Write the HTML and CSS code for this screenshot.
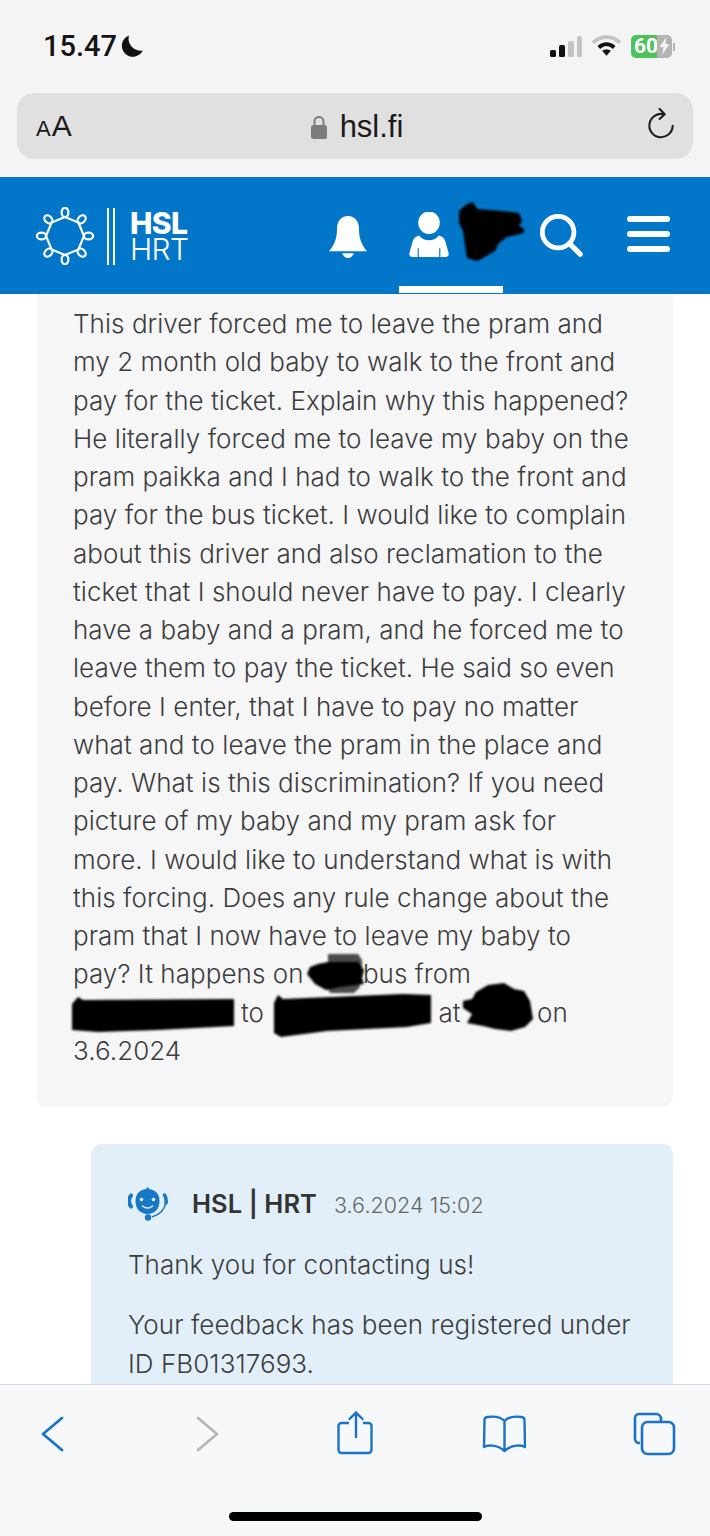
FILE: index.html
```html
<!DOCTYPE html>
<html lang="en">
<head>
<meta charset="utf-8">
<title>HSL feedback</title>
<link rel="stylesheet" href="styles.css">
</head>
<body>
<div class="phone">
  <div class="status">
    <div class="time"><span>15.47</span>
      <svg class="moon" viewBox="0 0 24 24" width="24" height="24"><path d="M9 1.500A11 11 0 1 0 22.800 16.500 A12 12 0 0 1 9 1.500Z" fill="#111"/></svg>
    </div>
    <div class="status-right">
      <svg width="32" height="21" viewBox="0 0 32 21"><rect x="0" y="14" width="6" height="7" rx="1.500" fill="#111"/><rect x="9" y="9" width="6" height="12" rx="1.500" fill="#111"/><rect x="18" y="5" width="6" height="16" rx="1.500" fill="#c4c4c4"/><rect x="27" y="0" width="5" height="21" rx="1.500" fill="#c4c4c4"/></svg>
      <svg width="29" height="22" viewBox="0 0 30 22"><path d="M1 7.500C9 0 21 0 29 7.500" fill="none" stroke="#c4c4c4" stroke-width="4"/><path d="M7 12.500C12 8 18 8 23 12.500" fill="none" stroke="#111" stroke-width="4"/><path d="M10.500 16L15 21l4.500-5C17 14 13 14 10.500 16Z" fill="#111"/></svg>
      <div class="battery"><div class="battery-fill">60</div><div class="battery-rest">
        <svg width="11" height="18" viewBox="0 0 10 16"><path d="M6.500 0L0.500 9h3.500L3 16l6.500-9.500H6Z" fill="#f2f2f2"/></svg>
      </div><i class="battery-cap"></i></div>
    </div>
  </div>

  <div class="urlbar">
    <div class="aa"><small>A</small>A</div>
    <div class="host">
      <svg width="16" height="24" viewBox="0 0 16 24"><path d="M3.500 11V6.500a4.500 4.500 0 0 1 9 0V11" fill="none" stroke="#7c7c7c" stroke-width="2"/><rect x="0" y="10" width="16" height="14" rx="2.500" fill="#7c7c7c"/></svg>
      <span>hsl.fi</span>
    </div>
    <div class="reload">
      <svg width="28" height="33" viewBox="0 0 30 35"><path d="M18 6.500A12.500 12.500 0 1 0 27.500 19" fill="none" stroke="#1c1c1c" stroke-width="2.200" stroke-linecap="round"/><path d="M13.500 1L19 6.500l-5.500 5" fill="none" stroke="#1c1c1c" stroke-width="2.200" stroke-linecap="round" stroke-linejoin="round"/></svg>
    </div>
  </div>

  <header class="site-header">
    <div class="brand">
      <svg class="brand-mark" width="58" height="58" viewBox="-29 -29 58 58">
        <g fill="none" stroke="#fff" stroke-width="2.200">
          <polygon points="0,-19 13.400,-13.400 19,0 13.400,13.400 0,19 -13.400,13.400 -19,0 -13.400,-13.400"/>
          <ellipse cx="0" cy="-23.500" rx="3.400" ry="4.600"/>
          <ellipse cx="0" cy="-23.500" rx="3.400" ry="4.600" transform="rotate(45)"/>
          <ellipse cx="0" cy="-23.500" rx="3.400" ry="4.600" transform="rotate(90)"/>
          <ellipse cx="0" cy="-23.500" rx="3.400" ry="4.600" transform="rotate(135)"/>
          <ellipse cx="0" cy="-23.500" rx="3.400" ry="4.600" transform="rotate(180)"/>
          <ellipse cx="0" cy="-23.500" rx="3.400" ry="4.600" transform="rotate(225)"/>
          <ellipse cx="0" cy="-23.500" rx="3.400" ry="4.600" transform="rotate(270)"/>
          <ellipse cx="0" cy="-23.500" rx="3.400" ry="4.600" transform="rotate(315)"/>
        </g>
      </svg>
      <div class="brand-bars"></div>
      <div class="brand-name"><b>HSL</b><span>HRT</span></div>
    </div>
    <nav class="site-nav">
      <svg class="ico-bell" width="40" height="42" viewBox="0 0 40 44"><path d="M20 0c-7.500 0-11.500 6-11.500 13 0 10-2.500 17-8.500 24h40c-6-7-8.500-14-8.500-24C31.500 6 27.500 0 20 0Z" fill="#fff"/><path d="M14 39h12c-1 3.500-3.500 5-6 5s-5-1.500-6-5Z" fill="#fff"/></svg>
      <div class="nav-user">
        <svg width="40" height="45" viewBox="0 0 40 46"><ellipse cx="20" cy="11" rx="11" ry="11.500" fill="#fff"/><path d="M10 24c2 3 5.500 5 10 5s8-2 10-5c4 1 6 3 7 7l3 11c.5 2-.5 4-3 4H3c-2.500 0-3.500-2-3-4l3-11c1-4 3-6 7-7Z" fill="#fff"/><path d="M9 37v9M31 37v9" stroke="#0277c9" stroke-width="1.200"/></svg>
      </div>
      <svg class="ico-search" width="44" height="44" viewBox="0 0 46 46"><circle cx="20" cy="20" r="16.500" fill="none" stroke="#fff" stroke-width="5"/><path d="M32 32l11 11" stroke="#fff" stroke-width="5.500" stroke-linecap="round"/></svg>
      <div class="ico-menu"><i></i><i></i><i></i></div>
    </nav>
    <svg class="blob-user" width="70" height="62" viewBox="0 0 70 62"><path d="M2 10L10 3 16 1 20 8 45 10 62 12 65 20 62 25 67 28 67 32 50 36 42 42 38 50 24 58 20 60 10 57 8 44 6 30 2 22Z" fill="#000"/></svg>
  </header>

  <main class="thread">
    <section class="msg msg-user">
      <p>This driver forced me to leave the pram and<br>
      my 2 month old baby to walk to the front and<br>
      pay for the ticket. Explain why this happened?<br>
      He literally forced me to leave my baby on the<br>
      pram paikka and I had to walk to the front and<br>
      pay for the bus ticket. I would like to complain<br>
      about this driver and also reclamation to the<br>
      ticket that I should never have to pay. I clearly<br>
      have a baby and a pram, and he forced me to<br>
      leave them to pay the ticket. He said so even<br>
      before I enter, that I have to pay no matter<br>
      what and to leave the pram in the place and<br>
      pay. What is this discrimination? If you need<br>
      picture of my baby and my pram ask for<br>
      more. I would like to understand what is with<br>
      this forcing. Does any rule change about the<br>
      pram that I now have to leave my baby to<br>
      pay? It happens on <span class="gap gap-bus"></span>bus from<br>
      <span class="gap gap-from"></span>to <span class="gap gap-to"></span>at <span class="gap gap-at"></span>on<br>
      3.6.2024</p>
      <svg class="redactions" width="636" height="813" viewBox="37 293 636 813">
        <path d="M328 953h30l4 6v6l-3 5 1 16-6 6h-24l-3-6 1-4Z" fill="#4a4a4a"/>
        <path d="M318 963l10-2 30 0 6 8-2 8 2 6-24 3-14 3-11-6-8-10 3-7Z" fill="#000"/>
        <path d="M72 1003l6-7 5 3 151-1 0 27-76 4-60 2-26-2Z" fill="#000"/>
        <path d="M274 1002l4-8 5 4 120-5 28 1 0 28-24 4-80 4-46 6-7-4Z" fill="#000"/>
        <path d="M463 1000l9-2 4-7 12-7 16-2 10 6 10 2 6 10 3 18-8 8-14 4-16-2-12-3-16-3 5-9-9-6Z" fill="#000"/>
      </svg>
    </section>

    <section class="msg msg-hsl">
      <div class="msg-head">
        <svg width="40" height="34" viewBox="0 0 40 34">
          <path d="M19.500 2c8 0 12 5 12 12 0 8-5 13-12 13S7.500 22 7.500 14C7.500 7 11.500 2 19.500 2Z" fill="#1878c6"/>
          <path d="M17 3L19.500 0 22 3Z" fill="#1878c6"/>
          <path d="M3 8.500C0.500 12 0.500 16 3 19.500" fill="none" stroke="#1878c6" stroke-width="4" stroke-linecap="round"/>
          <path d="M36.500 8C38.500 11 38.500 13 38 16" fill="none" stroke="#1878c6" stroke-width="3.500" stroke-linecap="round"/>
          <path d="M38 15C37 22 33 27 24 30" fill="none" stroke="#1878c6" stroke-width="1.600"/>
          <circle cx="13.500" cy="12.500" r="1.800" fill="#e2eff8"/><circle cx="25.500" cy="12.500" r="1.800" fill="#e2eff8"/>
          <path d="M14.500 19c3 2.500 7 2.500 10 0" fill="none" stroke="#e2eff8" stroke-width="1.500" stroke-linecap="round"/>
          <circle cx="20" cy="30.500" r="3.200" fill="#1878c6"/>
        </svg>
        <strong>HSL | HRT</strong>
        <time>3.6.2024 15:02</time>
      </div>
      <p class="para">Thank you for contacting us!</p>
      <p>Your feedback has been registered under<br>ID FB01317693.</p>
    </section>
  </main>

  <footer class="toolbar">
    <div class="tools">
      <svg width="44" height="46" viewBox="0 0 44 46"><path d="M32 7L13 23l19 16" fill="none" stroke="#1a73c8" stroke-width="2.800" stroke-linecap="round" stroke-linejoin="round"/></svg>
      <svg width="44" height="46" viewBox="0 0 44 46"><path d="M17 7l19 16-19 16" fill="none" stroke="#b5b5b5" stroke-width="2.800" stroke-linecap="round" stroke-linejoin="round"/></svg>
      <svg width="44" height="46" viewBox="0 0 44 46"><path d="M17 12h-7.500a3 3 0 0 0-3 3V39a3 3 0 0 0 3 3h27a3 3 0 0 0 3-3V15a3 3 0 0 0-3-3H31" fill="none" stroke="#1a73c8" stroke-width="2.400"/><path d="M24 26V1.500M17.500 8L24 1.500 30.500 8" fill="none" stroke="#1a73c8" stroke-width="2.400" stroke-linecap="round" stroke-linejoin="round"/></svg>
      <svg width="44" height="46" viewBox="0 0 44 46"><path d="M22.500 10c-4-4.500-10-5-17-4-2 .2-3 1-3 3L2 36c3-2 13-3 20.500 4 7.500-7 17.500-6 20.500-4l-.5-27c0-2-1-2.800-3-3-7-1-13-.5-17 4ZM22.500 10V40" fill="none" stroke="#1a73c8" stroke-width="2.400" stroke-linejoin="round"/></svg>
      <svg width="44" height="46" viewBox="0 0 44 46"><path d="M7 32H6a4 4 0 0 1-4-4V7a4 4 0 0 1 4-4h17a5 5 0 0 1 5 5v3" fill="none" stroke="#1a73c8" stroke-width="2.600"/><rect x="9" y="11" width="32" height="32" rx="5.500" fill="none" stroke="#1a73c8" stroke-width="2.600"/></svg>
    </div>
    <div class="home-pill"></div>
  </footer>
</div>
</body>
</html>
```

FILE: styles.css
```css
* { box-sizing: border-box; }
html, body { margin: 0; padding: 0; }
body { font-family: Inter, "Open Sans", sans-serif; background: #f4f4f4; }
.phone { width: 710px; height: 1536px; display: flex; flex-direction: column; overflow: hidden; background: #f4f4f4; }

.status { height: 93px; flex: none; padding: 23px 38px 0 43px; display: flex; justify-content: space-between; align-items: flex-start; }
.time { display: flex; align-items: center; gap: 3px; font-family: Roboto, sans-serif; font-weight: 500; font-size: 29px; line-height: 46px; color: #141414; }
.moon { margin-top: -1px; }
.status-right { display: flex; align-items: center; gap: 10px; height: 46px; }
.battery { position: relative; display: flex; width: 41px; height: 23px; border-radius: 5px; font-family: Roboto, sans-serif; }
.battery-fill { width: 26px; background: #4cc25c; border-radius: 5px 0 0 5px; color: #fff; font-size: 21px; font-weight: 700; line-height: 23px; padding-left: 3px; white-space: nowrap; }
.battery-rest { flex: 1; background: #b4b4b4; border-radius: 0 5px 5px 0; display: flex; align-items: center; justify-content: center; }
.battery-cap { position: absolute; right: -3px; top: 8px; width: 2px; height: 8px; background: #b4b4b4; }

.urlbar { flex: none; height: 66px; margin: 0 17px 18px; border-radius: 17px; background: #e0e0e0; display: grid; grid-template-columns: 1fr auto 1fr; align-items: center; padding: 0 18px; color: #1a1a1a; }
.aa { font-family: "Liberation Sans", sans-serif; font-size: 30px; line-height: 1; margin-left: 1px; }
.aa small { font-size: 22px; margin-right: 1px; }
.host { display: flex; align-items: center; gap: 13px; font-family: "Liberation Sans", sans-serif; font-size: 31px; margin-left: 4px; margin-top: 1px; }
.reload { justify-self: end; display: flex; margin-top: -4px; }

.site-header { position: relative; flex: none; height: 117px; background: #0277c9; padding-left: 37px; display: flex; align-items: flex-start; justify-content: space-between; color: #fff; }
.brand { display: flex; align-items: center; height: 116px; margin-top: 1px; }
.brand-mark { margin-left: -1px; }
.brand-bars { width: 8px; height: 57px; margin-left: 13px; border-left: 2.500px solid #fff; border-right: 2.500px solid #fff; }
.brand-name { margin-left: 15px; display: flex; flex-direction: column; font-size: 30px; line-height: 26px; letter-spacing: -0.6px; }
.brand-name b { font-weight: 800; }
.brand-name span { font-weight: 300; }

.site-nav { display: flex; align-items: flex-start; padding-right: 40px; height: 117px; }
.ico-bell { margin-top: 39px; margin-right: 31px; }
.nav-user { width: 104px; height: 116px; border-bottom: 7px solid #fff; padding: 35px 0 0 10px; margin-right: 36px; }
.ico-search { margin-top: 36px; margin-right: 44px; }
.ico-menu { display: flex; flex-direction: column; gap: 9px; margin-top: 39px; width: 43px; }
.ico-menu i { display: block; height: 6px; border-radius: 3px; background: #fff; }
.blob-user { position: absolute; left: 457px; top: 24px; filter: blur(1px); }

.thread { flex: 1; min-height: 0; overflow: hidden; background: #fff; padding: 0 37px; display: flex; flex-direction: column; align-items: flex-end; gap: 37px; }
.msg { flex: none; border-radius: 0 0 10px 10px; color: #3d3d3f; font-size: 26px; font-weight: 350; letter-spacing: 0.05px; line-height: 38.250px; }
.msg p { margin: 0; white-space: nowrap; }
.msg-user { position: relative; width: 636px; background: #f6f6f7; padding: 11px 36px 37px; }
.msg-hsl { width: 582px; background: #e2eff8; border-radius: 10px; padding: 42px 37px 60px; }
.para { margin-bottom: 22px !important; }
.gap { display: inline-block; }
.gap-bus { width: 52px; }
.gap-from { width: 168px; }
.gap-to { width: 167px; }
.gap-at { width: 69px; }
.redactions { position: absolute; left: 0; top: 0; filter: blur(1px); pointer-events: none; }
.msg-head { display: flex; align-items: center; height: 36px; margin-bottom: 24px; }
.msg-head svg { margin-right: 24px; }
.msg-head strong { font-weight: 600; font-size: 25.500px; color: #333; }
.msg-head time { margin-left: 17px; font-size: 21.500px; color: #666; margin-top: 3px; }

.toolbar { flex: none; height: 152px; background: #f7f8fa; border-top: 1.500px solid #d6d8dc; display: flex; flex-direction: column; align-items: center; }
.tools { width: 100%; display: flex; justify-content: space-between; padding: 26px 33px 0 30px; }
.home-pill { width: 253px; height: 9px; border-radius: 5px; background: #000; margin-top: 55px; }
```
